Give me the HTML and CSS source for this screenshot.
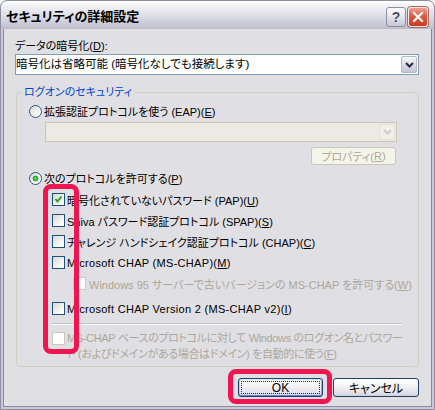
FILE: index.html
```html
<!DOCTYPE html>
<html lang="ja">
<head>
<meta charset="utf-8">
<link rel="stylesheet" href="styles.css">
</head>
<body>
<div class="window">
  <div class="titlebar">
    <span class="title">セキュリティの詳細設定</span>
    <div class="caption-btns">
      <div class="cbtn help">?</div>
      <div class="cbtn close">
        <svg width="12" height="12" viewBox="0 0 12 12"><path d="M2 2 L10 10 M10 2 L2 10" stroke="#fff" stroke-width="2.2" stroke-linecap="square" fill="none"/></svg>
      </div>
    </div>
  </div>
  <div class="client">
    <div class="label">データの暗号化(<u>D</u>):</div>
    <div class="combo">
      <span class="combo-text">暗号化は省略可能 (暗号化なしでも接続します)</span>
      <span class="combo-btn"><svg width="9" height="6" viewBox="0 0 9 6"><path d="M1 1 L4.5 4.5 L8 1" stroke="#2a2a40" stroke-width="2" fill="none"/></svg></span>
    </div>
    <fieldset class="group">
      <legend>ログオンのセキュリティ</legend>
      <div class="group-body">
        <div class="row radio-row r1"><span class="radio"></span><span>拡張認証プロトコルを使う (EAP)(<u>E</u>)</span></div>
        <div class="combo combo-disabled">
          <span class="combo-text"></span>
          <span class="combo-btn"><svg width="9" height="6" viewBox="0 0 9 6"><path d="M1 1 L4.5 4.5 L8 1" stroke="#cfcec4" stroke-width="2" fill="none"/></svg></span>
        </div>
        <div class="btn btn-disabled props">プロパティ(<u>R</u>)</div>
        <div class="row radio-row r2"><span class="radio checked"></span><span>次のプロトコルを許可する(<u>P</u>)</span></div>
        <div class="row cb-row first"><span class="cb"><svg width="11" height="11" viewBox="0 0 11 11"><path d="M2.5 5 L4.5 7.5 L8.5 2.5" stroke="#21a121" stroke-width="2" fill="none"/></svg></span><span>暗号化されていないパスワード (PAP)(<u>U</u>)</span></div>
        <div class="row cb-row"><span class="cb"></span><span>Shiva パスワード認証プロトコル (SPAP)(<u>S</u>)</span></div>
        <div class="row cb-row"><span class="cb"></span><span>チャレンジ ハンドシェイク認証プロトコル (CHAP)(<u>C</u>)</span></div>
        <div class="row cb-row latin"><span class="cb"></span><span>Microsoft CHAP (MS-CHAP)(<u>M</u>)</span></div>
        <div class="row cb-row sub disabled"><span class="cb cb-disabled"></span><span>Windows 95 サーバーで古いバージョンの MS-CHAP を許可する(<u>W</u>)</span></div>
        <div class="row cb-row v2 latin"><span class="cb"></span><span>Microsoft CHAP Version 2 (MS-CHAP v2)(<u>I</u>)</span></div>
        <div class="sep"></div>
        <div class="row last disabled"><span class="cb cb-disabled"></span><span>MS-CHAP ベースのプロトコルに対して Windows のログオン名とパスワー<br>ド (およびドメインがある場合はドメイン) を自動的に使う(<u>F</u>)</span></div>
      </div>
    </fieldset>
    <div class="buttons">
      <div class="btn btn-default ok">OK</div>
      <div class="btn cancel">キャンセル</div>
    </div>
  </div>
  <div class="mark mark-left"></div>
  <div class="mark mark-ok"></div>
</div>
</body>
</html>
```
FILE: styles.css
```css
html, body {
  margin: 0;
  padding: 0;
  background: #ffffff;
}
body {
  font-family: "Liberation Sans", "Noto Sans CJK JP", sans-serif;
  font-size: 11px;
  font-feature-settings: "palt";
  color: #000;
}
u {
  text-decoration: underline;
  text-underline-offset: 1px;
  text-decoration-thickness: 1px;
}
.window {
  position: relative;
  width: 435px;
  height: 410px;
  box-sizing: border-box;
  border: 1px solid #8e8ea2;
  border-radius: 7px 7px 0 0;
  background: #c9c8d8;
  display: flex;
  flex-direction: column;
  overflow: hidden;
}
.titlebar {
  height: 28px;
  flex: none;
  display: flex;
  align-items: center;
  justify-content: space-between;
  padding-left: 5px;
  border-radius: 6px 6px 0 0;
  background: linear-gradient(#ffffff 0%, #f0f0f4 20%, #dcdce6 55%, #c8c8d6 85%, #bcbccc 100%);
}
.title {
  font-family: "Noto Sans CJK JP", sans-serif;
  font-weight: bold;
  font-size: 13px;
  line-height: 16px;
  color: #000;
  margin-top: 2px;
}
.caption-btns {
  display: flex;
  gap: 2px;
  margin-right: 6px;
  margin-top: 3px;
}
.cbtn {
  width: 20px;
  height: 20px;
  box-sizing: border-box;
  border-radius: 3px;
  display: flex;
  align-items: center;
  justify-content: center;
}
.help {
  border: 1px solid #8c8ca4;
  background: linear-gradient(#ffffff, #e6e6ee 45%, #c6c6d6);
  color: #4a4a62;
  font-family: "Liberation Sans", sans-serif;
  font-weight: bold;
  font-size: 14px;
  line-height: 14px;
  text-shadow: 0 0 1px #fff;
}
.close {
  border: 1px solid #f4e8e6;
  box-shadow: 0 0 0 1px #a86a66;
  background: linear-gradient(#f0a090, #de5a44 45%, #c83a24);
}
.client {
  flex: 1;
  margin: 0 2px 2px 2px;
  border: 1px solid #8a8a9c;
  border-top: none;
  background: #e0dfe3;
  padding: 10px 12px 0 11px;
  display: flex;
  flex-direction: column;
}
.label {
  line-height: 14px;
  height: 14px;
  white-space: nowrap;
}
.combo {
  margin-top: 1px;
  height: 21px;
  box-sizing: border-box;
  border: 1px solid #7f9db9;
  background: #ffffff;
  display: flex;
  align-items: stretch;
}
.combo-text {
  flex: 1;
  line-height: 19px;
  white-space: nowrap;
  padding-left: 0;
  font-size: 11.5px;
}
.combo-btn {
  width: 16px;
  margin: 1px;
  box-sizing: border-box;
  border: 1px solid #b6b6c8;
  border-radius: 2px;
  background: linear-gradient(#f6f6fa, #dcdce6 50%, #c4c4d4);
  display: flex;
  align-items: center;
  justify-content: center;
}
.combo-disabled {
  margin: 3px 0 0 28px;
  width: 352px;
  height: 20px;
  border-color: #c9c7ba;
  background: #ebebe4;
}
.combo-disabled .combo-btn {
  border-color: #e2e1d8;
  background: #f0efe8;
}
.group {
  margin: 10px 0 0 1px;
  padding: 0 0 4px 0;
  width: 403px;
  box-sizing: border-box;
  border: 1px solid #d0d0bf;
  border-radius: 4px;
  min-width: 0;
}
.group legend {
  margin-left: 5px;
  padding: 0 2px;
  color: #0046d5;
  line-height: 14px;
}
.group-body {
  display: flex;
  flex-direction: column;
}
.row {
  display: flex;
  align-items: center;
  white-space: nowrap;
}
.radio-row {
  height: 16px;
  margin-left: 12px;
  gap: 2px;
}
.r1 { margin-top: 4px; }
.r2 { margin-top: 5px; }
.radio {
  width: 13px;
  height: 13px;
  box-sizing: border-box;
  border-radius: 50%;
  border: 1px solid #2c5a88;
  background: linear-gradient(135deg, #d4d4ce, #ffffff 80%);
  flex: none;
}
.radio.checked {
  background:
    radial-gradient(circle at 50% 50%, #6ee06a 0, #2fb02d 2px, #21a121 2.6px, rgba(255,255,255,0) 3.2px),
    linear-gradient(135deg, #d4d4ce, #ffffff 80%);
}
.btn {
  height: 19px;
  box-sizing: border-box;
  border: 1px solid #1f3f6e;
  border-radius: 3px;
  background: linear-gradient(#ffffff, #f4f4f6 40%, #dedee6 85%, #cfcfda);
  display: flex;
  align-items: center;
  justify-content: center;
  white-space: nowrap;
  position: relative;
  font-size: 12px;
}
.btn-disabled {
  border-color: #c9c7ba;
  background: #f5f4ea;
  color: #aca899;
  font-size: 11px;
}
.props {
  margin: 5px 0 0 294px;
  width: 85px;
  height: 18px;
}
.cb-row {
  height: 21px;
  margin-left: 35px;
  gap: 2px;
}
.cb-row.first { margin-top: 3px; }
.cb-row.sub {
  margin-left: 56px;
  gap: 3px;
}
.cb-row.v2 { margin-top: 4px; }
.cb-row.latin { letter-spacing: 0.3px; }
.cb {
  width: 13px;
  height: 13px;
  box-sizing: border-box;
  border: 1px solid #1c5180;
  background: linear-gradient(135deg, #d8d8d2, #ffffff 85%);
  flex: none;
  display: flex;
  align-items: center;
  justify-content: center;
}
.cb-disabled {
  border-color: #cac8bb;
  background: #ffffff;
}
.disabled {
  color: #aca899;
}
.sep {
  margin: 4px 0 0 35px;
  width: 350px;
  height: 0;
  border-top: 1px solid #c4c3c0;
  border-bottom: 1px solid #ffffff;
}
.last {
  margin: 5px 0 0 35px;
  align-items: flex-start;
  line-height: 16px;
  gap: 2px;
  letter-spacing: -0.35px;
}
.last .cb { margin-top: 2px; }
.buttons {
  display: flex;
  justify-content: flex-end;
  gap: 10px;
  margin-top: 11px;
}
.ok { width: 85px; }
.cancel { width: 86px; }
.btn-default {
  box-shadow: inset 0 1px 0 #cee7ff, inset 0 -1px 0 #6982ee, inset 1px 0 0 #b8d4f6, inset -1px 0 0 #8caef0;
}
.btn-default::after {
  content: "";
  position: absolute;
  left: 2px;
  right: 2px;
  top: 2px;
  bottom: 2px;
  border: 1px dotted #303030;
}
.mark {
  position: absolute;
  box-sizing: border-box;
  border: 5px solid #ee1550;
  border-radius: 8px;
}
.mark-left {
  left: 42px;
  top: 183px;
  width: 36px;
  height: 170px;
}
.mark-ok {
  left: 227px;
  top: 368px;
  width: 104px;
  height: 35px;
}
```
